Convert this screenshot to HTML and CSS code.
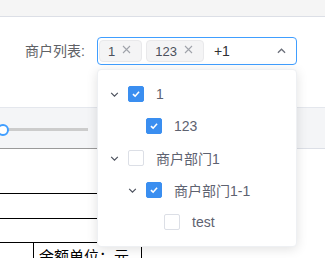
FILE: index.html
```html
<!DOCTYPE html>
<html>
<head>
<meta charset="utf-8">
<link rel="stylesheet" href="styles.css">
</head>
<body>
<div class="topbar"></div>
<div class="filter">
  <label class="label">商户列表:</label>
  <div class="select">
    <span class="tag">1<svg class="tag-x" viewBox="0 0 9 9"><path d="M1 1L8 8M8 1L1 8"/></svg></span>
    <span class="tag">123<svg class="tag-x" viewBox="0 0 9 9"><path d="M1 1L8 8M8 1L1 8"/></svg></span>
    <span class="more">+1</span>
    <svg class="caret" viewBox="0 0 10 6"><path d="M1 5L5 1L9 5"/></svg>
  </div>
</div>
<div class="band">
  <div class="slider-cell">
    <div class="slider"><span class="track"></span><span class="handle"></span></div>
  </div>
</div>
<div class="table">
  <div class="trow r1"></div>
  <div class="trow r2"></div>
  <div class="trow r3"><div class="cell c0"></div><div class="cell c1">余额单位：元</div></div>
</div>
<div class="dropdown">
  <div class="node l0"><svg class="exp" viewBox="0 0 10 6"><path d="M1 1L5 5L9 1"/></svg><span class="cb on"><svg viewBox="0 0 16 16"><path d="M4.5 8.2L7 10.5L11.5 5.5"/></svg></span><span class="txt">1</span></div>
  <div class="node l1"><span class="exp"></span><span class="cb on"><svg viewBox="0 0 16 16"><path d="M4.5 8.2L7 10.5L11.5 5.5"/></svg></span><span class="txt">123</span></div>
  <div class="node l0"><svg class="exp" viewBox="0 0 10 6"><path d="M1 1L5 5L9 1"/></svg><span class="cb"></span><span class="txt">商户部门1</span></div>
  <div class="node l1"><svg class="exp" viewBox="0 0 10 6"><path d="M1 1L5 5L9 1"/></svg><span class="cb on"><svg viewBox="0 0 16 16"><path d="M4.5 8.2L7 10.5L11.5 5.5"/></svg></span><span class="txt">商户部门1-1</span></div>
  <div class="node l2"><span class="exp"></span><span class="cb"></span><span class="txt">test</span></div>
</div>
</body>
</html>
```
FILE: styles.css
```css
* { box-sizing: border-box; }
html, body { margin: 0; padding: 0; background: #fff; }
body {
  width: 325px;
  height: 258px;
  overflow: hidden;
  position: relative;
  font-family: "Liberation Sans", "Noto Sans CJK SC", sans-serif;
  font-size: 14px;
  color: #606266;
}
.topbar {
  height: 17px;
  background: #f5f5f5;
  border-bottom: 1px solid #dcdfe6;
}
.filter {
  display: flex;
  align-items: center;
  padding: 20px 0 0 25px;
}
.label {
  width: 72px;
  font-size: 14px;
  color: #606266;
  line-height: 28px;
}
.select {
  width: 200px;
  height: 28px;
  border: 1px solid #409eff;
  border-radius: 4px;
  display: flex;
  align-items: center;
  padding-left: 1px;
  gap: 4px;
}
.tag {
  height: 22px;
  display: inline-flex;
  align-items: center;
  padding: 0 10px 0 8px;
  background: #f4f4f5;
  border: 1px solid #e9e9eb;
  border-radius: 4px;
  color: #4b505c;
  font-size: 13px;
}
.tag-x {
  width: 9px;
  height: 9px;
  margin-left: 7px;
  margin-top: -3px;
  fill: none;
  stroke: #a0a3aa;
  stroke-width: 1.1;
}
.more {
  margin-left: 6px;
  color: #303133;
  font-size: 14px;
}
.caret {
  width: 9px;
  height: 6px;
  margin-left: auto;
  margin-right: 10px;
  fill: none;
  stroke: #6b6f7a;
  stroke-width: 1.4;
}
.band {
  margin-top: 42px;
  height: 42px;
  border-top: 1px solid #e4e7ed;
  border-bottom: 1px solid #dcdfe6;
  background: #f4f5f7;
}
.slider-cell {
  width: 100px;
  height: 41px;
  border-bottom: 1px solid #9a9a9a;
  padding-top: 20px;
}
.slider {
  position: relative;
  width: 88px;
  height: 3px;
}
.track {
  display: block;
  width: 88px;
  height: 3px;
  background: #cccccc;
}
.handle {
  position: absolute;
  left: -3px;
  top: -4.5px;
  width: 12px;
  height: 12px;
  border-radius: 50%;
  background: #fff;
  border: 2px solid #409eff;
}
.table {
  margin-top: 44px;
  width: 260px;
}
.trow { border-top: 1px solid #000; }
.r1 { height: 25px; }
.r2 { height: 24px; }
.r3 { display: flex; height: 16px; }
.cell { height: 16px; }
.c0 { width: 33px; }
.c1 {
  width: 109px;
  border-left: 1px solid #000;
  border-right: 1px solid #000;
  padding-left: 5px;
  padding-top: 2px;
  color: #000;
  font-family: "Noto Sans CJK SC", sans-serif;
  font-size: 15px;
  line-height: 22px;
  white-space: nowrap;
  overflow: hidden;
}
.dropdown {
  position: absolute;
  left: 97px;
  top: 69px;
  width: 200px;
  height: 178px;
  background: #fff;
  border: 1px solid #eef0f3;
  border-radius: 4px;
  box-shadow: 0 2px 12px rgba(0, 0, 0, 0.12);
  padding-top: 8px;
}
.node {
  height: 32px;
  display: flex;
  align-items: center;
}
.l0 { padding-left: 12px; }
.l1 { padding-left: 30px; }
.l2 { padding-left: 48px; }
.exp {
  width: 9px;
  height: 5px;
  margin-right: 9px;
  fill: none;
  stroke: #4b505c;
  stroke-width: 1.4;
  flex: none;
}
.cb {
  width: 16px;
  height: 16px;
  border: 1px solid #dcdfe6;
  border-radius: 2px;
  background: #fff;
  margin-right: 12px;
  flex: none;
  display: flex;
}
.cb.on {
  background: #3a8ef0;
  border-color: #3a8ef0;
}
.cb svg {
  width: 14px;
  height: 14px;
  fill: none;
  stroke: #fff;
  stroke-width: 1.8;
}
.txt {
  color: #5e6270;
  font-size: 14px;
  white-space: nowrap;
}
```
